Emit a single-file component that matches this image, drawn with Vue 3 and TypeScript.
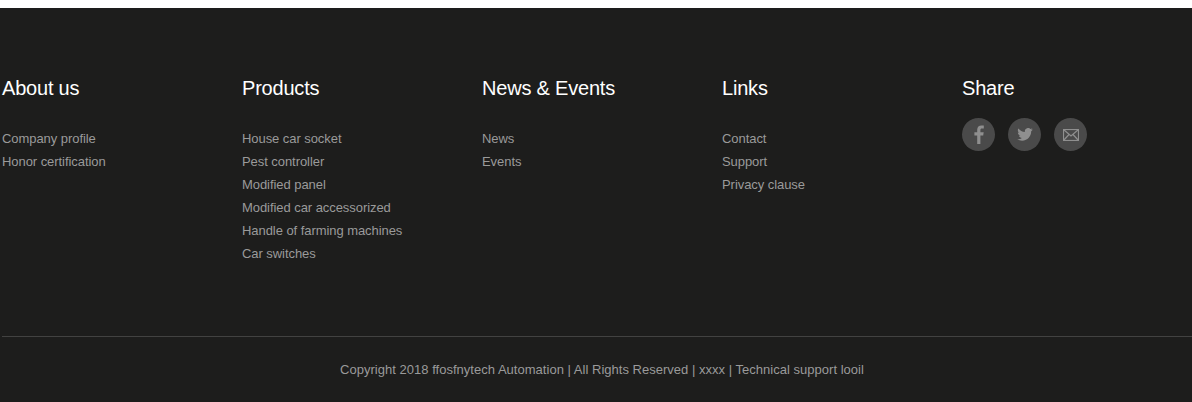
<script setup lang="ts">
interface FooterColumn {
  title: string
  links: string[]
}

const columns: FooterColumn[] = [
  { title: 'About us', links: ['Company profile', 'Honor certification'] },
  {
    title: 'Products',
    links: [
      'House car socket',
      'Pest controller',
      'Modified panel',
      'Modified car accessorized',
      'Handle of farming machines',
      'Car switches',
    ],
  },
  { title: 'News & Events', links: ['News', 'Events'] },
  { title: 'Links', links: ['Contact', 'Support', 'Privacy clause'] },
]
</script>

<template>
  <footer class="footer">
    <div class="footer__inner">
      <div class="footer__columns">
        <section v-for="col in columns" :key="col.title" class="footer__col">
          <h3 class="footer__title">{{ col.title }}</h3>
          <ul class="footer__links">
            <li v-for="link in col.links" :key="link">{{ link }}</li>
          </ul>
        </section>
        <section class="footer__col">
          <h3 class="footer__title">Share</h3>
          <div class="share">
            <a class="share__btn" aria-label="Facebook">
              <svg width="13" height="19" viewBox="0 0 13 19">
                <path d="M8.4 19V10.6h2.8l.5-3.3H8.4V5.2c0-1 .3-1.6 1.7-1.6h1.7V.6C11.500.5 10.500.4 9.400.4 6.900.4 5.200 1.900 5.200 4.700v2.600H2.400v3.300h2.800V19z" />
              </svg>
            </a>
            <a class="share__btn" aria-label="Twitter">
              <svg width="16" height="13" viewBox="0 0 24 20">
                <path d="M24 2.400c-.9.400-1.800.7-2.800.8 1-.6 1.800-1.600 2.200-2.700-1 .6-2 1-3.100 1.200A4.900 4.900 0 0 0 11.900 6.200C7.800 6 4.200 4 1.700.9c-1.300 2.200-.7 5.100 1.500 6.600-.8 0-1.600-.2-2.200-.6 0 2.400 1.700 4.400 3.900 4.900-.7.200-1.500.2-2.200.1.600 2 2.400 3.400 4.600 3.400A9.900 9.900 0 0 1 0 17.300 13.900 13.900 0 0 0 7.500 19.500c9.100 0 14.300-7.700 14-14.600 1-.7 1.800-1.500 2.500-2.500z" />
              </svg>
            </a>
            <a class="share__btn" aria-label="Email">
              <svg width="16" height="12" viewBox="0 0 16 12" class="share__mail">
                <rect x="0.500" y="0.500" width="15" height="11" />
                <path d="M.5.500 8 7l7.500-6.500M.5 11.500 6 5.500M15.500 11.500 10 5.500" />
              </svg>
            </a>
          </div>
        </section>
      </div>
      <p class="footer__copy">Copyright 2018 ffosfnytech Automation | All Rights Reserved | xxxx | Technical support looil</p>
    </div>
  </footer>
</template>

<style scoped>
.footer {
  margin-top: 8px;
  height: 394px;
  background: #1d1d1c;
  overflow: hidden;
  font-family: "Liberation Sans", Arial, sans-serif;
}

.footer__inner {
  width: 1200px;
  margin-left: 2px;
  padding-top: 68px;
}

.footer__columns {
  display: grid;
  grid-template-columns: repeat(5, 240px);
  height: 260px;
  border-bottom: 1px solid #424241;
}

.footer__title {
  margin: 0;
  height: 24px;
  font-size: 20px;
  font-weight: 400;
  line-height: 24px;
  letter-spacing: -0.2px;
  color: #fff;
}

.footer__links {
  list-style: none;
  margin: 27px 0 0;
  padding: 0;
}

.footer__links li {
  font-size: 13px;
  line-height: 23px;
  letter-spacing: -0.06px;
  color: #9a9a9a;
}

.share {
  display: flex;
  gap: 13px;
  margin-top: 18px;
}

.share__btn {
  display: flex;
  align-items: center;
  justify-content: center;
  width: 33px;
  height: 33px;
  border-radius: 50%;
  background: #4a4a4a;
}

.share__btn svg {
  fill: #8f8f8f;
}

.share__btn .share__mail {
  fill: none;
  stroke: #8f8f8f;
  stroke-width: 1.2;
}

.footer__copy {
  margin: 23px 0 0;
  font-size: 13px;
  line-height: 20px;
  letter-spacing: 0.02px;
  text-align: center;
  color: #9a9a9a;
}
</style>

<style>
html,
body {
  margin: 0;
  background: #fff;
  overflow: hidden;
}
</style>
